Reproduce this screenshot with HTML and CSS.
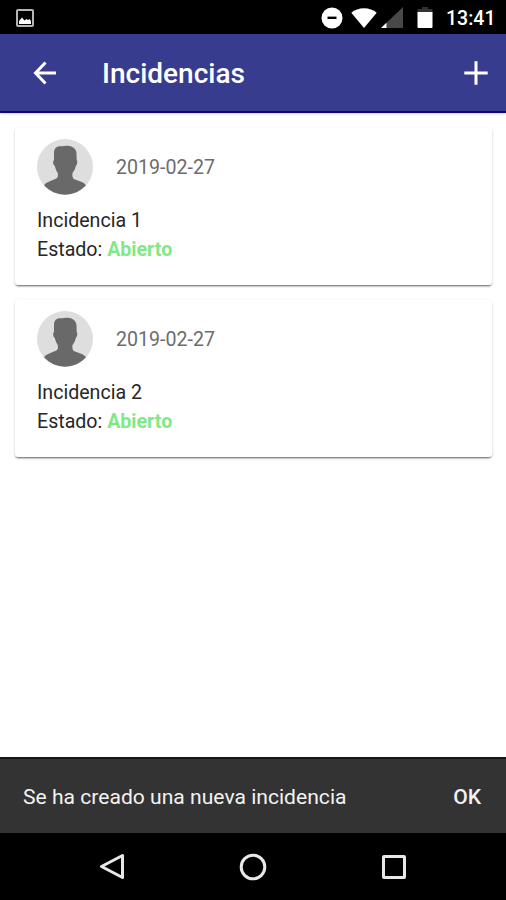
FILE: index.html
```
<!DOCTYPE html>
<html lang="es">

<head>
    <meta charset="utf-8">
    <title>Incidencias</title>
    <link rel="stylesheet" href="styles.css">
</head>

<body>

    <div class="status-bar">
        <svg class="picture" width="18" height="18" viewBox="0 0 18 18">
            <rect x="1" y="1" width="16" height="16" rx="1" fill="none" stroke="#b5b5b5" stroke-width="2"/>
            <path d="M3 15v-3l3-3.5 2.5 3 2-1.5 1.5 1 1.5-1 1.5 2v3z" fill="#fff"/>
        </svg>
        <div class="status-icons">
            <svg width="22" height="22" viewBox="0 0 22 22">
                <circle cx="11" cy="11" r="10.5" fill="#fff"/>
                <path d="M6.5 10.8h9" stroke="#000" stroke-width="2.4"/>
            </svg>
            <svg class="wifi" width="26" height="20" viewBox="0 0 26 20">
                <path d="M0.3 4.8Q5.5 0.3 13 0.3T25.7 4.8L13 20z" fill="#fff"/>
            </svg>
            <svg class="signal" width="22" height="21" viewBox="0 0 22 21">
                <path d="M22 0v21H0z" fill="#484848"/>
                <path d="M5.5 15.7V21H0z" fill="#fff"/>
            </svg>
            <svg class="battery" width="16" height="21" viewBox="0 0 16 21">
                <path d="M5 0h6v2h4.5v4H0.5V2H5z" fill="#333"/>
                <path d="M0.5 5h15v15a1 1 0 0 1-1 1h-13a1 1 0 0 1-1-1z" fill="#fff"/>
            </svg>
            <span class="time">13:41</span>
        </div>
    </div>

    <header>
        <svg width="24" height="24" viewBox="0 0 24 24" fill="none" stroke="#fff" stroke-width="3">
            <path d="M23 12H2.5M12.5 1.5L2.5 12 12.5 22.5"/>
        </svg>
        <h1>Incidencias</h1>
        <svg width="24" height="24" viewBox="0 0 24 24" stroke="#fff" stroke-width="3">
            <path d="M0.3 12h23.4M12 0.3v23.4"/>
        </svg>
    </header>

    <main>
        <div class="card">
            <div class="card-header">
                <svg class="avatar" width="56" height="56" viewBox="0 0 56 56">
                    <circle cx="28" cy="28" r="28" fill="#dedede"/>
                    <path d="M17 14C17 8 21 6.8 25 7.3C30 6 38.5 6.5 39.5 14L39.7 21C41 22 40 26 38.8 27C38 31 36.5 32.5 35.5 34C35 39 36 40 40 41.3C44 42.5 47 43.5 49 46.3A28 28 0 0 1 7 46.3C9 43.5 13 42.3 17 40.6C20.5 39.3 21.5 38 20.7 34C19.5 32 18.5 30 17.8 27C16 26 15.6 22 17 21z" fill="#696969"/>
                </svg>
                <span class="date">2019-02-27</span>
            </div>
            <p>Incidencia 1</p>
            <p>Estado: <b>Abierto</b></p>
        </div>

        <div class="card">
            <div class="card-header">
                <svg class="avatar" width="56" height="56" viewBox="0 0 56 56">
                    <circle cx="28" cy="28" r="28" fill="#dedede"/>
                    <path d="M17 14C17 8 21 6.8 25 7.3C30 6 38.5 6.5 39.5 14L39.7 21C41 22 40 26 38.8 27C38 31 36.5 32.5 35.5 34C35 39 36 40 40 41.3C44 42.5 47 43.5 49 46.3A28 28 0 0 1 7 46.3C9 43.5 13 42.3 17 40.6C20.5 39.3 21.5 38 20.7 34C19.5 32 18.5 30 17.8 27C16 26 15.6 22 17 21z" fill="#696969"/>
                </svg>
                <span class="date">2019-02-27</span>
            </div>
            <p>Incidencia 2</p>
            <p>Estado: <b>Abierto</b></p>
        </div>
    </main>

    <div class="toast">
        <span>Se ha creado una nueva incidencia</span>
        <span class="toast-button">OK</span>
    </div>

    <nav>
        <svg width="28" height="28" viewBox="0 0 28 28">
            <path d="M24.5 2.5v22L3.5 13.5z"/>
        </svg>
        <svg width="28" height="28" viewBox="0 0 28 28">
            <circle cx="14" cy="14" r="11.8"/>
        </svg>
        <svg width="28" height="28" viewBox="0 0 28 28">
            <rect x="3.5" y="3.5" width="21" height="21" rx="0.5"/>
        </svg>
    </nav>

</body>

</html>
```
FILE: styles.css
```
* {
    box-sizing: border-box;
}

body {
    font-family: Roboto, sans-serif;
    margin: 0;
    height: 900px;
    background-color: #fff;
    display: flex;
    flex-direction: column;
    overflow: hidden;
}

svg {
    display: block;
    flex-shrink: 0;
}

.status-bar {
    height: 34px;
    padding: 1px 12px 0 16px;
    background-color: #000;
    display: flex;
    align-items: center;
    justify-content: space-between;
}

.status-icons {
    display: flex;
    align-items: center;
}

.wifi {
    margin-left: 8px;
}

.signal {
    margin-left: 4.5px;
}

.battery {
    margin-left: 14px;
}

.time {
    width: 48px;
    margin-left: 13px;
    color: #fff;
    font-size: 19.5px;
    font-weight: 500;
    white-space: nowrap;
    margin-top: 1px;
}

header {
    height: 79px;
    padding: 1px 18px 0 33px;
    background-color: #383c8e;
    border-bottom: 2px solid #11086f;
    box-shadow: 0 1px 2px rgba(0, 0, 0, 0.2);
    display: flex;
    align-items: center;
}

h1 {
    flex: 1;
    margin: 0 0 0 45px;
    color: #fff;
    font-size: 28px;
    font-weight: 500;
}

main {
    flex: 1;
    padding: 15px 14px 0 15px;
}

.card {
    height: 157px;
    margin-bottom: 15px;
    padding: 11px 22px;
    border-radius: 3px;
    box-shadow: 0 2px 2px -1px rgba(0, 0, 0, 0.55), 0 1px 3px rgba(0, 0, 0, 0.16);
}

.card-header {
    display: flex;
    align-items: center;
    margin-bottom: 11px;
}

.date {
    margin-left: 23px;
    color: #6c6c6c;
    font-size: 19.6px;
}

p {
    margin: 0;
    color: #262626;
    font-size: 19.6px;
    line-height: 29px;
}

p b {
    color: #81e886;
    font-weight: 700;
}

.toast {
    height: 76px;
    padding: 0 25px 0 23px;
    background-color: #333;
    border-top: 2px solid #161616;
    color: #f2f2f2;
    font-size: 21.1px;
    display: flex;
    align-items: center;
    justify-content: space-between;
}

.toast-button {
    font-weight: 500;
}

nav {
    height: 67px;
    padding: 0 98px;
    background-color: #000;
    display: flex;
    align-items: center;
    justify-content: space-between;
}

nav svg {
    fill: none;
    stroke: #e8e8e8;
    stroke-width: 3;
    stroke-linejoin: round;
}
```
